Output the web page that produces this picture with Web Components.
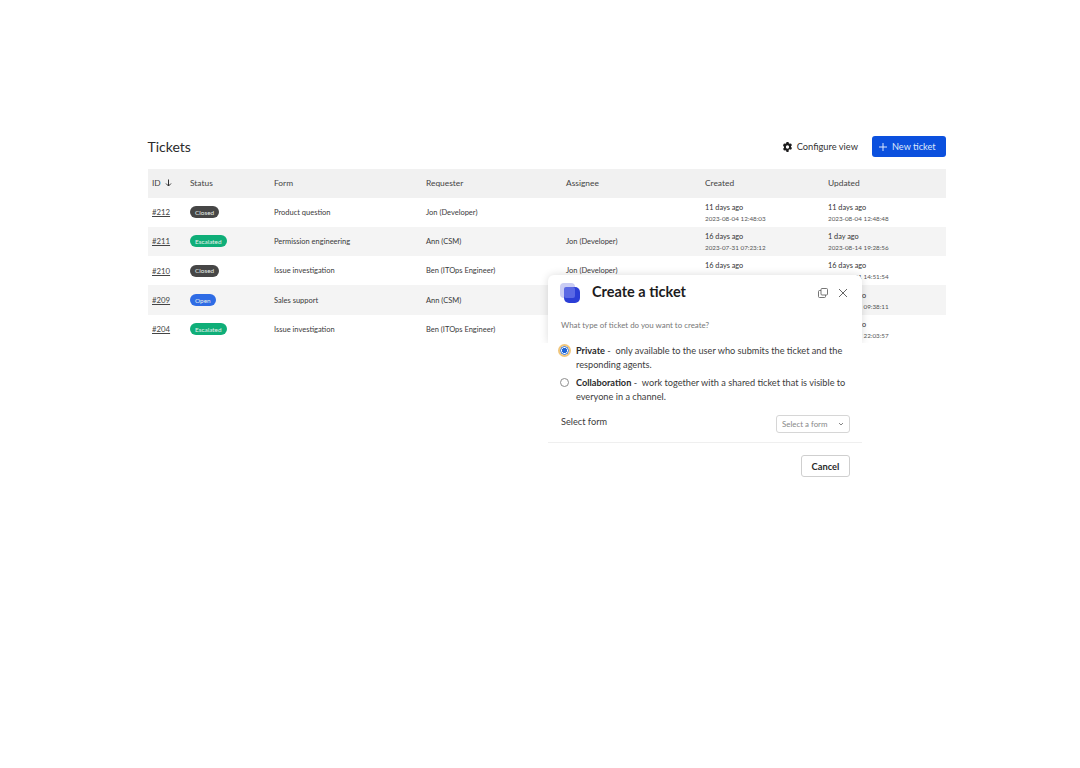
<!DOCTYPE html>
<html lang="en">
<head>
<meta charset="utf-8">
<title>Tickets</title>
<style>
    html, body { margin: 0; background: #fff; }
    body { font-family: Lato, "Liberation Sans", sans-serif; color: #1d1c1d; height: 768px; overflow: hidden; }
</style>
</head>
<body>
<ticket-page>
    <ticket-header slot="header"></ticket-header>
    <ticket-table slot="table"></ticket-table>
    <create-ticket-modal slot="modal"></create-ticket-modal>
</ticket-page>

<script>
const COLUMNS = '38px 84px 152px 140px 139px 123px 122px';

// cells fully covered by the dialog are left empty
const TICKETS = [
    { id: '#212', status: 'Closed', form: 'Product question', requester: 'Jon (Developer)', assignee: '',
      created: ['11 days ago', '2023-08-04 12:48:03'], updated: ['11 days ago', '2023-08-04 12:48:48'] },
    { id: '#211', status: 'Escalated', form: 'Permission engineering', requester: 'Ann (CSM)', assignee: 'Jon (Developer)',
      created: ['16 days ago', '2023-07-31 07:23:12'], updated: ['1 day ago', '2023-08-14 19:28:56'] },
    { id: '#210', status: 'Closed', form: 'Issue investigation', requester: 'Ben (ITOps Engineer)', assignee: 'Jon (Developer)',
      created: ['16 days ago', ''], updated: ['16 days ago', '2023-07-31 14:51:54'] },
    { id: '#209', status: 'Open', form: 'Sales support', requester: 'Ann (CSM)', assignee: '',
      created: ['', ''], updated: ['16 days ago', '2023-07-31 09:38:11'] },
    { id: '#204', status: 'Escalated', form: 'Issue investigation', requester: 'Ben (ITOps Engineer)', assignee: '',
      created: ['', ''], updated: ['20 days ago', '2023-07-27 22:03:57'] },
];

class TicketPage extends HTMLElement {
    constructor() {
        super();
        this.attachShadow({ mode: 'open' });
        this.shadowRoot.innerHTML = `
            <style>
                :host { display: block; position: relative; width: 1080px; height: 768px; }
                .content { width: 798px; padding: 136px 0 0 148px; display: flex; flex-direction: column; gap: 12px; }
                .overlay { position: absolute; left: 548px; top: 275px; }
            </style>
            <div class="content">
                <slot name="header"></slot>
                <slot name="table"></slot>
            </div>
            <div class="overlay"><slot name="modal"></slot></div>
        `;
    }
}

class TicketHeader extends HTMLElement {
    constructor() {
        super();
        this.attachShadow({ mode: 'open' });
        this.shadowRoot.innerHTML = `
            <style>
                :host { display: flex; align-items: center; justify-content: space-between; height: 21px; }
                h1 { margin: 0 0 0 -.5px; font-size: 14px; font-weight: 400; color: #2b2b2b; }
                .actions { display: flex; align-items: center; gap: 14px; }
                .configure { display: flex; align-items: center; gap: 5px; font-size: 9.300px; color: #333; }
                .new { display: flex; align-items: center; gap: 5px; box-sizing: border-box; width: 74px; height: 21px; padding-left: 7px;
                    background: #0b50de; color: #dfe8fb; border-radius: 3px; font-size: 9.200px; }
                svg { display: block; }
            </style>
            <h1>Tickets</h1>
            <div class="actions">
                <span class="configure">
                    <svg width="9" height="10" viewBox="0 0 18 20"><path fill="#1d1c1d" fill-rule="evenodd" d="M7 0h4l.6 2.700 1.700 1L16 2.900l2 3.400-2 1.900v2l2 1.900-2 3.400-2.700-.8-1.700 1L11 20H7l-.6-2.700-1.700-1L2 17.100l-2-3.400 2-1.900v-2L0 6.300l2-3.400 2.700.8 1.700-1zM9 6.700a3.300 3.300 0 1 0 0 6.600 3.300 3.300 0 0 0 0-6.600z"/></svg>
                    <span>Configure view</span>
                </span>
                <span class="new">
                    <svg width="8" height="8" viewBox="0 0 8 8"><path d="M4 0v8M0 4h8" stroke="#dfe8fb" stroke-width="1" fill="none"/></svg>
                    <span>New ticket</span>
                </span>
            </div>
        `;
    }
}

class StatusBadge extends HTMLElement {
    constructor() {
        super();
        this.attachShadow({ mode: 'open' });
        const colors = { Closed: '#464646', Escalated: '#0fae78', Open: '#2f6ce5' };
        const status = this.getAttribute('status');
        this.shadowRoot.innerHTML = `
            <style>
                :host { display: inline-flex; align-items: center; height: 12px; padding: 0 5px; border-radius: 6px;
                    background: ${colors[status]}; color: #e6eeeb; font-size: 6.400px; }
            </style>
            ${status}
        `;
    }
}

class TicketRow extends HTMLElement {
    constructor() {
        super();
        this.attachShadow({ mode: 'open' });
    }

    set ticket(t) {
        this.shadowRoot.innerHTML = `
            <style>
                :host { display: grid; grid-template-columns: ${COLUMNS}; align-items: center; height: 29.300px; font-size: 7.500px; color: #3a3a3a; }
                :host([striped]) { background: #f4f4f4; }
                .cell { padding-left: 4px; white-space: nowrap; }
                .id { font-size: 7.800px; color: #444; text-decoration: underline; }
                .age { font-size: 7.300px; color: #333; line-height: 10px; min-height: 10px; }
                .stamp { font-size: 6.300px; color: #555; line-height: 10px; min-height: 10px; margin-top: 1px; }
                .dates { margin-top: 2px; }
            </style>
            <div class="cell id">${t.id}</div>
            <div class="cell"><status-badge status="${t.status}"></status-badge></div>
            <div class="cell">${t.form}</div>
            <div class="cell">${t.requester}</div>
            <div class="cell">${t.assignee}</div>
            <div class="cell dates"><div class="age">${t.created[0]}</div><div class="stamp">${t.created[1]}</div></div>
            <div class="cell dates"><div class="age">${t.updated[0]}</div><div class="stamp">${t.updated[1]}</div></div>
        `;
    }
}

class TicketTable extends HTMLElement {
    constructor() {
        super();
        this.attachShadow({ mode: 'open' });
        this.shadowRoot.innerHTML = `
            <style>
                :host { display: block; }
                .head { display: grid; grid-template-columns: ${COLUMNS}; align-items: center; box-sizing: border-box; height: 28.500px; padding-bottom: 1px;
                    background: #f1f1f1; font-size: 8.400px; color: #444; }
                .head div { padding-left: 4px; display: flex; align-items: center; gap: 4px; }
            </style>
            <div class="head">
                <div>ID <svg width="7" height="8" viewBox="0 0 7 8"><path d="M3.500 .5v6.500M1 4.500L3.500 7 6 4.500" stroke="#333" stroke-width="1" fill="none"/></svg></div>
                <div>Status</div><div>Form</div><div>Requester</div><div>Assignee</div><div>Created</div><div>Updated</div>
            </div>
            <div class="rows"></div>
        `;
        const rows = this.shadowRoot.querySelector('.rows');
        TICKETS.forEach((t, i) => {
            const row = document.createElement('ticket-row');
            if (i % 2) row.setAttribute('striped', '');
            row.ticket = t;
            rows.appendChild(row);
        });
    }
}

class TicketOption extends HTMLElement {
    constructor() {
        super();
        this.attachShadow({ mode: 'open' });
        this.shadowRoot.innerHTML = `
            <style>
                :host { display: grid; grid-template-columns: 15px 1fr; font-size: 9.200px; line-height: 13.500px; color: #3c3c3c; }
                .radio { box-sizing: border-box; width: 9px; height: 9px; margin: 2px 0 0 -1px; border-radius: 50%; border: 1px solid #8d8d8d; background: #fff; }
                :host([checked]) .radio { border: 1px solid #1d64d8; outline: 2px solid #f0c67c; background: radial-gradient(circle, #1d64d8 0 2.400px, #fff 2.900px); }
                .line { display: flex; white-space: pre; }
                b { color: #2a2a2a; }
            </style>
            <span class="radio"></span>
            <div>
                <div class="line"><b><slot name="title"></slot></b><span> -  </span><slot name="lead"></slot></div>
                <div class="line"><slot name="rest"></slot></div>
            </div>
        `;
    }
}

class CreateTicketModal extends HTMLElement {
    constructor() {
        super();
        this.attachShadow({ mode: 'open' });
        this.shadowRoot.innerHTML = `
            <style>
                :host { display: block; position: relative; box-sizing: border-box; width: 314px; height: 215px; background: #fff; border-radius: 6px 6px 0 0; }
                /* the shadow only shows where the dialog covers the table */
                .shade { position: absolute; left: 0; right: 0; top: 0; height: 68px; border-radius: 6px 6px 0 0;
                    box-shadow: 0 0 9px rgba(0, 0, 0, .14); clip-path: inset(-14px -14px 0 -14px); }
                .inner { position: relative; }
                header { display: flex; align-items: center; height: 36px; padding: 0 14px 0 11px; }
                .logo { display: block; margin: -1px 11px 0 0; }
                h2 { margin: 0; padding-bottom: 3px; flex: 1; font-size: 14.500px; font-weight: 700; color: #1d1c1d; }
                .tools { display: flex; align-items: center; gap: 10px; }
                svg { display: block; }
                .body { padding: 9px 12px 0 13px; }
                .hint { font-size: 7.900px; line-height: 12px; color: #777; margin: -1px 0 13px; }
                .options { display: flex; flex-direction: column; gap: 5px; }
                .select-row { display: flex; justify-content: space-between; margin-top: 12px; font-size: 9.200px; color: #3c3c3c; }
                .select-row > span { line-height: 12px; margin-top: 1px; }
                .select { display: flex; align-items: center; justify-content: space-between; box-sizing: border-box; width: 74px; height: 18px;
                    padding: 0 5px; border: 1px solid #d6d6d6; border-radius: 3px; font-size: 7.900px; color: #888; }
                .divider { height: 1px; background: #efefef; margin-top: 9px; }
                footer { display: flex; justify-content: flex-end; padding: 12px 12px 0; }
                .cancel { display: flex; align-items: center; justify-content: center; box-sizing: border-box; width: 49px; height: 22px;
                    border: 1px solid #cfcfcf; border-radius: 3px; font-size: 9.300px; font-weight: 700; color: #2a2a2a; }
            </style>
            <div class="shade"></div>
            <div class="inner">
                <header>
                    <svg class="logo" width="22" height="22" viewBox="0 0 22 22">
                        <rect x="1" y="1" width="15" height="15" rx="4" fill="#c9ccf4"/>
                        <rect x="5" y="5" width="16" height="16" rx="5" fill="#2b3ed6"/>
                        <rect x="5" y="5" width="11" height="11" rx="2" fill="#5a68e4"/>
                    </svg>
                    <h2>Create a ticket</h2>
                    <div class="tools">
                        <svg width="10" height="10" viewBox="0 0 10 10" fill="none" stroke="#666" stroke-width=".9"><rect x="3" y=".5" width="6.500" height="6.500" rx="1"/><path d="M3 2.500H1.500a1 1 0 0 0-1 1v5a1 1 0 0 0 1 1h5a1 1 0 0 0 1-1V7"/></svg>
                        <svg width="10" height="10" viewBox="0 0 10 10" fill="none" stroke="#555" stroke-width=".9"><path d="M1 1l8 8M9 1l-8 8"/></svg>
                    </div>
                </header>
                <div class="body">
                    <div class="hint">What type of ticket do you want to create?</div>
                    <div class="options">
                        <ticket-option checked>
                            <span slot="title">Private</span>
                            <span slot="lead">only available to the user who submits the ticket and the</span>
                            <span slot="rest">responding agents.</span>
                        </ticket-option>
                        <ticket-option>
                            <span slot="title">Collaboration</span>
                            <span slot="lead">work together with a shared ticket that is visible to</span>
                            <span slot="rest">everyone in a channel.</span>
                        </ticket-option>
                    </div>
                    <div class="select-row">
                        <span>Select form</span>
                        <div class="select">Select a form
                            <svg width="6" height="4" viewBox="0 0 6 4" fill="none" stroke="#777" stroke-width=".9"><path d="M1 1l2 2 2-2"/></svg>
                        </div>
                    </div>
                </div>
                <div class="divider"></div>
                <footer><span class="cancel">Cancel</span></footer>
            </div>
        `;
    }
}

customElements.define('status-badge', StatusBadge);
customElements.define('ticket-row', TicketRow);
customElements.define('ticket-table', TicketTable);
customElements.define('ticket-header', TicketHeader);
customElements.define('ticket-option', TicketOption);
customElements.define('create-ticket-modal', CreateTicketModal);
customElements.define('ticket-page', TicketPage);
</script>
</body>
</html>
